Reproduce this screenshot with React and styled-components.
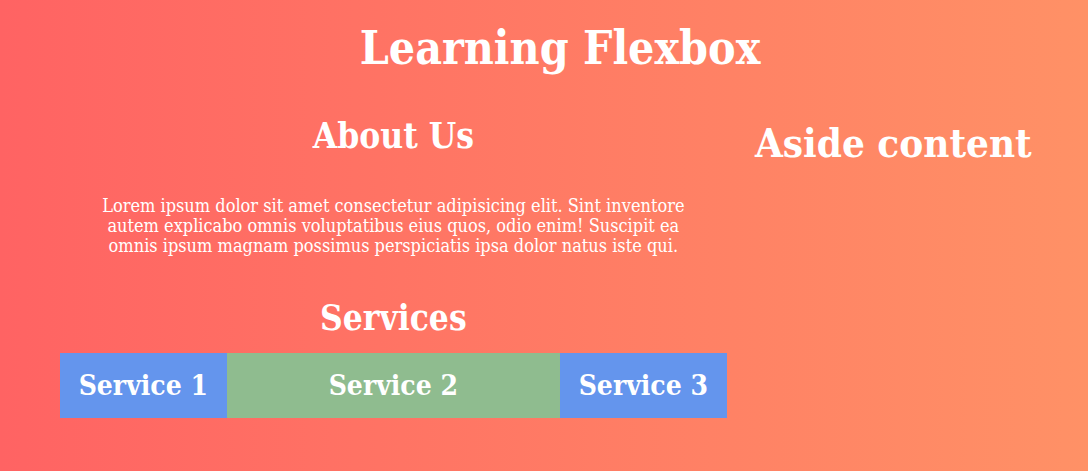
import styled, { createGlobalStyle } from "styled-components";

const GlobalStyle = createGlobalStyle`
	html, body {
		margin: 0;
		height: 100%;
	}
	body {
		background: linear-gradient(to right, #ff6363, #ff9166);
		color: white;
		font-family: "DejaVu Serif Condensed", "DejaVu Serif", serif;
	}
`;

const Page = styled.div`
	width: 1000px;
	padding-left: 60px;
`;

const Title = styled.h1`
	margin: 0;
	padding-top: 20px;
	font-size: 46px;
	text-align: center;
	line-height: 56px;
`;

const Layout = styled.div`
	display: flex;
`;

const Main = styled.main`
	flex: 2;
	display: flex;
	flex-direction: column;
	align-items: center;
`;

const Aside = styled.aside`
	flex: 1;
	text-align: center;
`;

const Heading = styled.h2`
	margin: ${(p) => p.$margin || "0"};
	font-size: 35px;
	line-height: 44px;
	font-weight: bold;
`;

const AsideHeading = styled.h2`
	margin: 42px 0 0;
	font-size: 40px;
	line-height: 50px;
`;

const Text = styled.p`
	width: 612px;
	margin: 38px 0 40px;
	font-size: 18px;
	line-height: 20px;
	text-align: center;
`;

const Services = styled.div`
	display: flex;
	width: 100%;
	margin-top: 13px;
`;

const Service = styled.div`
	flex: ${(p) => p.$grow};
	background-color: ${(p) => p.$color};
	height: 65px;
	display: flex;
	align-items: center;
	justify-content: center;
	font-size: 28px;
	font-weight: bold;
`;

function App() {
	return (
		<>
			<GlobalStyle />
			<Page>
				<Title>Learning Flexbox</Title>
				<Layout>
					<Main>
						<Heading $margin="38px 0 0">About Us</Heading>
						<Text>
							Lorem ipsum dolor sit amet consectetur adipisicing elit. Sint
							inventore autem explicabo omnis voluptatibus eius quos, odio enim!
							Suscipit ea omnis ipsum magnam possimus perspiciatis ipsa dolor
							natus iste qui.
						</Text>
						<Heading>Services</Heading>
						<Services>
							<Service $grow={1} $color="cornflowerblue">Service 1</Service>
							<Service $grow={2} $color="darkseagreen">Service 2</Service>
							<Service $grow={1} $color="cornflowerblue">Service 3</Service>
						</Services>
					</Main>
					<Aside>
						<AsideHeading>Aside content</AsideHeading>
					</Aside>
				</Layout>
			</Page>
		</>
	);
}

export default App;
